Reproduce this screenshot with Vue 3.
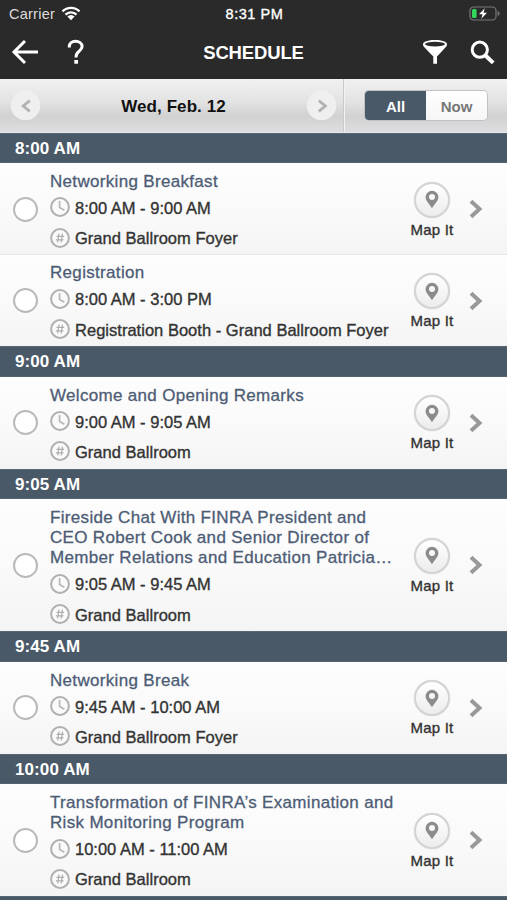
<script setup>
const sections = [
  {
    time: '8:00 AM',
    sessions: [
      { title: ['Networking Breakfast'], hours: '8:00 AM - 9:00 AM', place: 'Grand Ballroom Foyer' },
      { title: ['Registration'], hours: '8:00 AM - 3:00 PM', place: 'Registration Booth - Grand Ballroom Foyer' },
    ],
  },
  {
    time: '9:00 AM',
    sessions: [{ title: ['Welcome and Opening Remarks'], hours: '9:00 AM - 9:05 AM', place: 'Grand Ballroom' }],
  },
  {
    time: '9:05 AM',
    sessions: [
      {
        title: [
          'Fireside Chat With FINRA President and',
          'CEO Robert Cook and Senior Director of',
          'Member Relations and Education Patricia…',
        ],
        hours: '9:05 AM - 9:45 AM',
        place: 'Grand Ballroom',
      },
    ],
  },
  {
    time: '9:45 AM',
    sessions: [{ title: ['Networking Break'], hours: '9:45 AM - 10:00 AM', place: 'Grand Ballroom Foyer' }],
  },
  {
    time: '10:00 AM',
    sessions: [
      {
        title: ['Transformation of FINRA’s Examination and', 'Risk Monitoring Program'],
        hours: '10:00 AM - 11:00 AM',
        place: 'Grand Ballroom',
      },
    ],
  },
]
</script>

<template>
  <div class="screen">
    <header class="top">
      <div class="status">
        <div class="carrier">
          <span>Carrier</span>
          <svg class="wifi" viewBox="0 0 20 15" width="20" height="15">
            <path d="M1.5 5.4a12 12 0 0 1 17 0M4.5 8.6a7.8 7.8 0 0 1 11 0" fill="none" stroke="#fff" stroke-width="2.3" />
            <path d="M6.4 10.6a5 5 0 0 1 7.2 0L10 14.3z" fill="#fff" />
          </svg>
        </div>
        <span class="clock">8:31 PM</span>
        <svg class="battery" viewBox="0 0 31 15" width="31" height="15">
          <rect x="1" y="1" width="26" height="13" rx="3.6" fill="none" stroke="#77797a" stroke-width="1.2" />
          <path d="M28.6 5v5q2-.7 2-2.500t-2-2.500z" fill="#77797a" />
          <rect x="3" y="3" width="4.600" height="9" rx="1.500" fill="#32d65b" />
          <path d="M15.800 2.200L10 8.300h3.500L12.300 12.800 18 6.700h-3.500z" fill="#fff" />
        </svg>
      </div>
      <div class="nav">
        <svg class="back" viewBox="0 0 28 26" width="28" height="26">
          <path d="M14 2L3 13l11 11M3 13h24" fill="none" stroke="#fff" stroke-width="3" />
        </svg>
        <svg class="help" viewBox="0 0 18 26" width="18" height="26">
          <path d="M2.300 8.500V7.600C2.300 4 5 2.300 8.500 2.300s6.600 1.900 6.600 5.300c0 4.300-6 4.700-6 9.600v1.200" fill="none" stroke="#fff" stroke-width="3" />
          <rect x="7.300" y="21" width="3.700" height="3.700" fill="#fff" />
        </svg>
        <h1>SCHEDULE</h1>
        <svg class="funnel" viewBox="0 0 26 26" width="26" height="26">
          <path d="M1 5.200c0-2.400 5-4.200 12-4.200s12 1.800 12 4.200c0 1.700-1 2.700-2.300 4L15 17.500v7.200h-3.700v-7.200L3.300 9.200C2 7.900 1 6.900 1 5.200z" fill="#fff" />
          <ellipse cx="13" cy="5.100" rx="10" ry="2.300" fill="#2a2a2a" />
        </svg>
        <svg class="search" viewBox="0 0 25 25" width="25" height="25">
          <circle cx="9.800" cy="9.700" r="7.600" fill="none" stroke="#fff" stroke-width="3" />
          <path d="M15.200 15.200l8 7.700" stroke="#fff" stroke-width="4" />
        </svg>
      </div>
    </header>

    <div class="datebar">
      <div class="day">
        <span class="step">
          <svg viewBox="0 0 12 14" width="12" height="14"><path d="M9.800 1.700L3.200 7l6.600 5.300" fill="none" stroke="#b2b2b2" stroke-width="2.800" /></svg>
        </span>
        <span class="date">Wed, Feb. 12</span>
        <span class="step">
          <svg viewBox="0 0 12 14" width="12" height="14"><path d="M2.800 1.700L9.400 7l-6.600 5.300" fill="none" stroke="#b2b2b2" stroke-width="2.800" /></svg>
        </span>
      </div>
      <div class="filter">
        <div class="toggle"><span class="on">All</span><span class="off">Now</span></div>
      </div>
    </div>

    <section v-for="s in sections" :key="s.time">
      <h2>{{ s.time }}</h2>
      <article v-for="e in s.sessions" :key="e.title[0]" class="row">
        <span class="check"></span>
        <div class="info">
          <h3><span v-for="line in e.title" :key="line">{{ line }}</span></h3>
          <div class="line hours">
            <svg viewBox="0 0 20 20" width="20" height="20">
              <circle cx="10" cy="10" r="8.900" fill="#fafafa" stroke="#b0b0b0" stroke-width="2" />
              <path d="M9.600 4v6.400l4.800 2.900" fill="none" stroke="#b8b8b8" stroke-width="1.700" />
            </svg>
            <span>{{ e.hours }}</span>
          </div>
          <div class="line place">
            <svg viewBox="0 0 20 20" width="20" height="20">
              <circle cx="10" cy="10" r="8.900" fill="#fafafa" stroke="#b0b0b0" stroke-width="2" />
              <path d="M9 5.500L7.700 14.500M12.500 5.500l-1.300 9M6.500 8.300h7.600M5.900 11.800h7.600" fill="none" stroke="#adadad" stroke-width="1.200" />
            </svg>
            <span>{{ e.place }}</span>
          </div>
        </div>
        <div class="map">
          <span class="pin">
            <svg viewBox="0 0 14 19" width="14" height="19">
              <path fill-rule="evenodd" d="M7 .8a6.400 6.400 0 0 0-6.400 6.400C.6 11 4 13.200 7 18.300 10 13.200 13.400 11 13.400 7.200A6.400 6.400 0 0 0 7 .8zm0 3.300a3 3 0 1 1 0 6 3 3 0 0 1 0-6z" fill="#8b8b8b" />
            </svg>
          </span>
          <span class="label">Map It</span>
        </div>
        <svg class="chev" viewBox="0 0 14 20" width="14" height="20">
          <path d="M2 2.200L10.500 10 2 17.800" fill="none" stroke="#999" stroke-width="4" />
        </svg>
      </article>
    </section>
    <h2></h2>
  </div>
</template>

<style>
body { margin: 0; background: #fafafa; }
</style>

<style scoped>
.screen {
  width: 507px;
  height: 900px;
  overflow: hidden;
  font-family: "Liberation Sans", Arial, sans-serif;
  color: #333;
}
svg { display: block; flex: none; }
h1, h2, h3 { margin: 0; }
.top { height: 79px; background: #2a2a2a; color: #fff; }
.status {
  height: 27px;
  display: grid;
  grid-template-columns: 1fr auto 1fr;
  align-items: center;
  padding: 0 7px 0 9px;
  box-sizing: border-box;
  font-size: 14.500px;
}
.carrier { display: flex; align-items: center; gap: 6px; color: #ddd; }
.carrier span { letter-spacing: 0.250px; }
.wifi { margin-top: -1px; }
.clock { letter-spacing: 0.550px; -webkit-text-stroke: 0.350px #fff; }
.battery { justify-self: end; width: 31px; }
.nav { display: flex; align-items: center; height: 50px; padding: 0 12px 2px 11px; }
.help { margin-left: 28px; }
.nav h1 { flex: 1; text-align: center; font-size: 18.500px; line-height: 22px; padding: 1px 0 0 0; letter-spacing: -0.150px; }
.funnel { margin-right: 22px; }

.datebar {
  display: flex;
  height: 53.800px;
  box-sizing: border-box;
  background: linear-gradient(#f1f1f2, #e2e2e3 45%, #d1d1d2 70%, #dedee0);
  border-bottom: 1.500px solid #e4e8ef;
}
.day {
  width: 344px;
  box-sizing: border-box;
  padding: 1px 7px 0 11px;
  display: flex;
  align-items: center;
  justify-content: space-between;
  border-right: 1px solid #c9c9c9;
}
.step {
  width: 29px;
  height: 29px;
  border-radius: 50%;
  display: flex;
  align-items: center;
  justify-content: center;
  background: #efefef;
  box-shadow: 0 0 1.500px #fff, 0 1px 2px #c8c8c8;
}
.date { font-size: 17px; font-weight: bold; color: #111; padding-top: 3px; letter-spacing: 0.080px; }
.filter { flex: 1; display: flex; align-items: center; padding: 1px 0 0 20px; border-left: 1px solid #f2f2f2; }
.toggle {
  display: flex;
  width: 122px;
  height: 29px;
  border-radius: 4px;
  overflow: hidden;
  box-shadow: 0 0 0 1px #bfc3c7;
  font-size: 15px;
  font-weight: bold;
  line-height: 31px;
  text-align: center;
}
.on { width: 61px; background: #4a5968; color: #fff; }
.off { flex: 1; background: linear-gradient(#fff, #f6f6f6); color: #777; }

h2 {
  height: 30.600px;
  box-sizing: border-box;
  padding-left: 15px;
  background: #4a5968;
  border-top: 1px solid #596674;
  border-bottom: 1px solid #566270;
  color: #fff;
  font-size: 17px;
  line-height: 30px;
  letter-spacing: 0.100px;
}
.row {
  display: flex;
  align-items: center;
  box-sizing: border-box;
  padding-left: 13px;
  background: linear-gradient(#fdfdfd, #fafafa 50%, #f4f4f4);
}
.row + .row { border-top: 1px solid #e6e6e6; margin-top: -1px; }
.check {
  width: 25px;
  height: 25px;
  box-sizing: border-box;
  flex: none;
  border: 2px solid #b9b9b9;
  border-radius: 50%;
  background: #fff;
}
.info { width: 350px; margin-left: 12px; padding: 8.500px 0 2.300px; }
h3 { font-size: 17px; font-weight: normal; line-height: 20.360px; color: #4d5c75; -webkit-text-stroke: 0.300px #4d5c75; }
h3 span { display: block; white-space: nowrap; letter-spacing: 0.320px; }
.line { display: flex; align-items: center; gap: 5px; font-size: 16.500px; -webkit-text-stroke: 0.350px #333; white-space: nowrap; }
.line svg { -webkit-text-stroke: 0; }
.line span { line-height: 20px; padding-top: 1px; }
.hours { height: 30.400px; }
.place { height: 30px; padding-top: 0; }
.place span { letter-spacing: 0.020px; }
.map { width: 64px; display: flex; flex-direction: column; align-items: center; gap: 2px; padding-top: 3px; }
.pin {
  width: 36px;
  height: 36px;
  box-sizing: border-box;
  border: 2px solid #d3d3d3;
  border-radius: 50%;
  background: linear-gradient(#fff, #ececec);
  display: flex;
  align-items: center;
  justify-content: center;
  box-shadow: 0 0 1px #ccc;
}
.label { font-size: 15px; line-height: 20px; letter-spacing: 0.200px; -webkit-text-stroke: 0.350px #333; }
.chev { margin-left: 5px; }
</style>
